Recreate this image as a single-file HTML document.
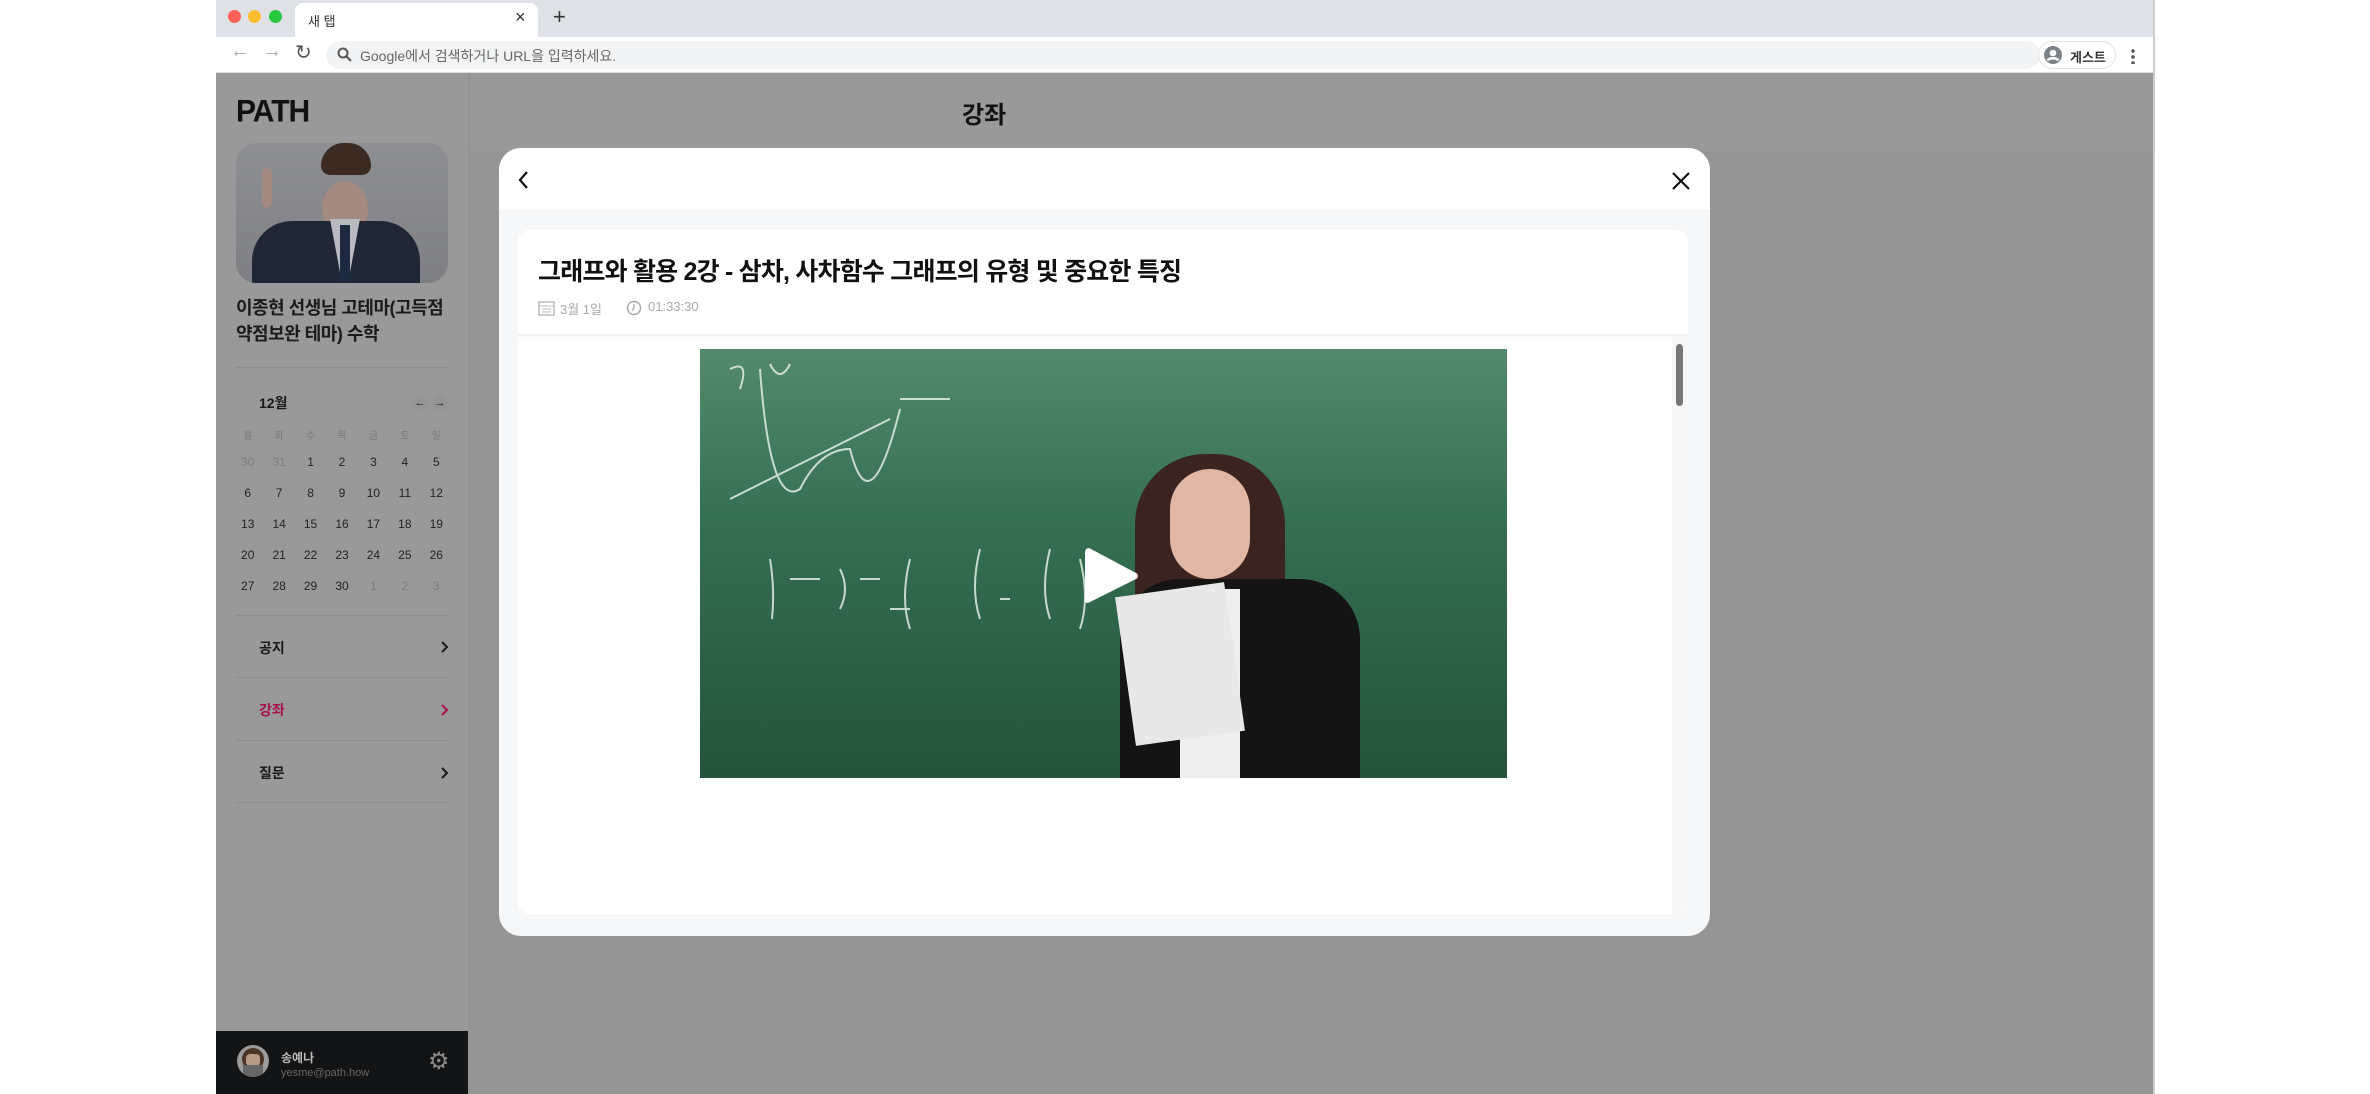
<!DOCTYPE html>
<html><head><meta charset="utf-8"><style>
*{margin:0;padding:0;box-sizing:border-box}
body{width:2370px;height:1094px;position:relative;background:#fff;font-family:"Liberation Sans","Noto Sans CJK KR",sans-serif;overflow:hidden}
.a{position:absolute}
</style></head><body>
<div class="a" style="left:216px;top:0;width:1939px;height:37px;background:#dee1e6"></div>
<div class="a" style="left:228px;top:10px;width:13px;height:13px;border-radius:50%;background:#fe5f57"></div>
<div class="a" style="left:248px;top:10px;width:13px;height:13px;border-radius:50%;background:#febc2e"></div>
<div class="a" style="left:269px;top:10px;width:13px;height:13px;border-radius:50%;background:#28c840"></div>
<div class="a" style="left:295px;top:3px;width:243px;height:34px;background:#fff;border-radius:8px 8px 0 0"></div>
<div class="a" style="left:308px;top:11px;font-size:13px;color:#333">새 탭</div>
<div class="a" style="left:515px;top:7px;font-size:18px;color:#333">×</div>
<div class="a" style="left:553px;top:4px;font-size:22px;color:#333">+</div>
<div class="a" style="left:216px;top:37px;width:1939px;height:36px;background:#fff;border-bottom:1px solid #ddd"></div>
<div class="a" style="left:230px;top:40px;font-size:20px;color:#aaa">←</div>
<div class="a" style="left:262px;top:40px;font-size:20px;color:#aaa">→</div>
<div class="a" style="left:295px;top:40px;font-size:20px;color:#555">↻</div>
<div class="a" style="left:326px;top:41px;width:1714px;height:28px;background:#f1f3f4;border-radius:14px"></div>
<svg class="a" style="left:337px;top:47px" width="16" height="16"><circle cx="6" cy="6" r="4.5" fill="none" stroke="#555" stroke-width="2"/><path d="M9.5 9.5L14 14" stroke="#555" stroke-width="2"/></svg>
<div class="a" style="left:360px;top:46px;font-size:14px;color:#666">Google에서 검색하거나 URL을 입력하세요.</div>
<div class="a" style="left:2038px;top:41px;width:78px;height:28px;border:1px solid #e3e3e3;border-radius:14px"></div>
<svg class="a" style="left:2043px;top:45px" width="20" height="20"><circle cx="10" cy="10" r="9" fill="#7d8289"/><circle cx="10" cy="8" r="3.3" fill="#fff"/><path d="M4.5 15.5c2-3 9-3 11 0" stroke="#fff" stroke-width="2.5" fill="none"/></svg>
<div class="a" style="left:2070px;top:47px;font-size:13px;color:#333;font-weight:bold">게스트</div>
<div class="a" style="left:2131px;top:48px;width:4px;height:16px;background:radial-gradient(circle,#555 1.6px,transparent 2px) 0 0/4px 6px"></div>

<div class="a" style="left:216px;top:73px;width:1939px;height:1021px;background:#949594"></div>
<div class="a" style="left:470px;top:73px;width:1685px;height:78px;background:#999"></div>
<div class="a" style="left:216px;top:73px;width:254px;height:1021px;background:#999"></div>
<div class="a" style="left:468px;top:73px;width:2px;height:1021px;background:#939393"></div>
<div class="a" style="left:2153px;top:0;width:2px;height:1094px;background:#ccc"></div>
<div class="a" style="left:236px;top:95px;font-size:30px;font-weight:900;color:#111;letter-spacing:-1px;transform:scaleY(1.05)">PATH</div>
<div class="a" style="left:236px;top:143px;width:212px;height:140px;border-radius:20px;background:linear-gradient(#8e8f93,#7e7f83);overflow:hidden">
 <div class="a" style="left:86px;top:38px;width:46px;height:56px;border-radius:50%;background:#a48a80"></div>
 <div class="a" style="left:85px;top:0;width:50px;height:32px;border-radius:25px 25px 10px 10px;background:#3a2a22"></div>
 <div class="a" style="left:16px;top:78px;width:168px;height:80px;border-radius:40px 40px 0 0;background:#1f2735"></div>
 <div class="a" style="left:94px;top:76px;width:30px;height:64px;background:#b9bac0;clip-path:polygon(0 0,100% 0,60% 100%,40% 100%)"></div>
 <div class="a" style="left:104px;top:82px;width:10px;height:58px;background:#1d2841"></div>
 <div class="a" style="left:26px;top:25px;width:10px;height:40px;background:#a48a80;border-radius:5px"></div>
</div>
<div class="a" style="left:236px;top:295px;width:230px;font-size:18px;line-height:26px;font-weight:bold;color:#1a1a1a;letter-spacing:-0.5px;word-break:keep-all">이종현 선생님 고테마(고득점 약점보완 테마) 수학</div>
<div class="a" style="left:236px;top:367px;width:213px;height:1px;background:#8d8d8d"></div>
<div class="a" style="left:259px;top:393px;font-size:14px;font-weight:bold;color:#1a1a1a">12월</div>
<div class="a" style="left:412px;top:395px;width:16px;height:16px;border-radius:50%;background:#959595;font-size:11px;text-align:center;line-height:16px;color:#111">←</div>
<div class="a" style="left:432px;top:395px;width:16px;height:16px;border-radius:50%;background:#959595;font-size:11px;text-align:center;line-height:16px;color:#111">→</div>
<div class="a" style="left:232px;top:427px;width:220px;font-size:10px;color:#7a7a7a;display:grid;grid-template-columns:repeat(7,1fr);text-align:center">
<span>월</span><span>화</span><span>수</span><span>목</span><span>금</span><span>토</span><span>일</span></div>
<div class="a" style="left:232px;top:455px;width:220px;font-size:12px;color:#222;display:grid;grid-template-columns:repeat(7,1fr);grid-auto-rows:31px;text-align:center">
<span style="color:#7d7d7d">30</span><span style="color:#7d7d7d">31</span><span>1</span><span>2</span><span>3</span><span>4</span><span>5</span>
<span>6</span><span>7</span><span>8</span><span>9</span><span>10</span><span>11</span><span>12</span>
<span>13</span><span>14</span><span>15</span><span>16</span><span>17</span><span>18</span><span>19</span>
<span>20</span><span>21</span><span>22</span><span>23</span><span>24</span><span>25</span><span>26</span>
<span>27</span><span>28</span><span>29</span><span>30</span><span style="color:#7d7d7d">1</span><span style="color:#7d7d7d">2</span><span style="color:#7d7d7d">3</span></div>
<div class="a" style="left:236px;top:615px;width:213px;height:1px;background:#8d8d8d"></div>
<div class="a" style="left:259px;top:638px;font-size:14px;font-weight:bold;color:#1a1a1a">공지</div>
<svg class="a" style="left:440px;top:640px" width="10" height="14"><path d="M2 2L7 7L2 12" fill="none" stroke="#1a1a1a" stroke-width="2"/></svg>
<div class="a" style="left:236px;top:677px;width:213px;height:1px;background:#8d8d8d"></div>
<div class="a" style="left:259px;top:700px;font-size:14px;font-weight:bold;color:#a5124d">강좌</div>
<svg class="a" style="left:440px;top:703px" width="10" height="14"><path d="M2 2L7 7L2 12" fill="none" stroke="#a5124d" stroke-width="2"/></svg>
<div class="a" style="left:236px;top:740px;width:213px;height:1px;background:#8d8d8d"></div>
<div class="a" style="left:259px;top:763px;font-size:14px;font-weight:bold;color:#1a1a1a">질문</div>
<svg class="a" style="left:440px;top:766px" width="10" height="14"><path d="M2 2L7 7L2 12" fill="none" stroke="#1a1a1a" stroke-width="2"/></svg>
<div class="a" style="left:236px;top:802px;width:213px;height:1px;background:#8d8d8d"></div>
<div class="a" style="left:216px;top:1031px;width:252px;height:63px;background:#131416"></div>
<div class="a" style="left:237px;top:1045px;width:32px;height:32px;border-radius:50%;background:#9a9a9a;overflow:hidden"><div class="a" style="left:5px;top:3px;width:22px;height:22px;border-radius:11px;background:#4a3426"></div><div class="a" style="left:9px;top:9px;width:14px;height:12px;background:#b69a85;border-radius:4px"></div><div class="a" style="left:6px;top:20px;width:20px;height:12px;background:#666"></div></div>
<div class="a" style="left:281px;top:1049px;font-size:12px;color:#bbb;font-weight:bold">송예나</div>
<div class="a" style="left:281px;top:1067px;font-size:11px;color:#666">yesme@path.how</div>
<div class="a" style="left:428px;top:1050px;font-size:24px;color:#8a8a8a;line-height:1">⚙</div>
<div class="a" style="left:962px;top:95px;font-size:24px;font-weight:bold;color:#111">강좌</div>

<div class="a" style="left:499px;top:148px;width:1211px;height:788px;background:#f6f7f9;border-radius:22px;overflow:hidden">
 <div class="a" style="left:0;top:0;width:1211px;height:61px;background:#fff"></div>
 <svg class="a" style="left:18px;top:22px" width="14" height="20"><path d="M10 2L3 10L10 18" fill="none" stroke="#111" stroke-width="2.2"/></svg>
 <svg class="a" style="left:1172px;top:23px" width="20" height="20"><path d="M2 2L18 18M18 2L2 18" stroke="#111" stroke-width="2.2"/></svg>
 <div class="a" style="left:19px;top:82px;width:1170px;height:684px;background:#fff;border-radius:12px;overflow:hidden">
  <div class="a" style="left:20px;top:22px;font-size:25px;font-weight:bold;color:#111;letter-spacing:-0.8px">그래프와 활용 2강 - 삼차, 사차함수 그래프의 유형 및 중요한 특징</div>
  <svg class="a" style="left:20px;top:70px" width="17" height="16"><rect x="1" y="2" width="15" height="13" fill="none" stroke="#bbb" stroke-width="1.5"/><path d="M1 6H16M4 9h9M4 12h9" stroke="#bbb" stroke-width="1"/></svg>
  <div class="a" style="left:42px;top:69px;font-size:13px;color:#aaa">3월 1일</div>
  <svg class="a" style="left:108px;top:70px" width="16" height="16"><circle cx="8" cy="8" r="6.5" fill="none" stroke="#aaa" stroke-width="1.5"/><path d="M8 4v4l-2 3" fill="none" stroke="#aaa" stroke-width="1.3"/></svg>
  <div class="a" style="left:130px;top:69px;font-size:13px;color:#aaa">01:33:30</div>
  <div class="a" style="left:0;top:104px;width:1170px;height:2px;background:#f0f1f3;box-shadow:0 2px 4px rgba(0,0,0,.05)"></div>
  <div class="a" style="left:1154px;top:106px;width:16px;height:578px;background:#f7f7f7"></div>
  <div class="a" style="left:1158px;top:114px;width:7px;height:62px;border-radius:4px;background:#777"></div>
  <div class="a" style="left:182px;top:119px;width:807px;height:429px;background:linear-gradient(180deg,#538a6c 0%,#356f51 40%,#245339 100%);overflow:hidden">
   <svg class="a" style="left:0;top:0" width="812" height="432"><g fill="none" stroke="#e4ece4" stroke-width="2" opacity=".85">
    <path d="M30 150L190 70"/><path d="M60 20Q70 160 100 140Q120 100 150 100Q170 180 200 60"/>
    <path d="M70 210Q75 240 72 270M90 230h30M140 220q10 20 0 40M160 230h20M210 210q-10 40 0 70M280 200q-10 40 0 70M300 250h10M350 200q-10 40 0 70M380 210q10 40 0 70M30 20q20-10 10 20M70 15q10 20 20 0"/>
    <path d="M190 260h20"/><path d="M200 50h50"/></g></svg>
   <div class="a" style="left:435px;top:105px;width:150px;height:260px;border-radius:70px 70px 20px 20px;background:#3b2420"></div>
   <div class="a" style="left:470px;top:120px;width:80px;height:110px;border-radius:40px;background:#e0b7a5"></div>
   <div class="a" style="left:420px;top:230px;width:240px;height:210px;border-radius:60px 60px 0 0;background:#141414"></div>
   <div class="a" style="left:480px;top:240px;width:60px;height:200px;background:#eee"></div>
   <div class="a" style="left:425px;top:240px;width:110px;height:150px;background:#e8e8e8;transform:rotate(-8deg)"></div>
   <svg class="a" style="left:383px;top:196px" width="58" height="62"><path d="M6 3Q2 3 2 8V54Q2 60 7 57L53 34Q57 31 53 28L8 4Z" fill="#fff"/></svg>
  </div>
 </div>
</div>
</body></html>
